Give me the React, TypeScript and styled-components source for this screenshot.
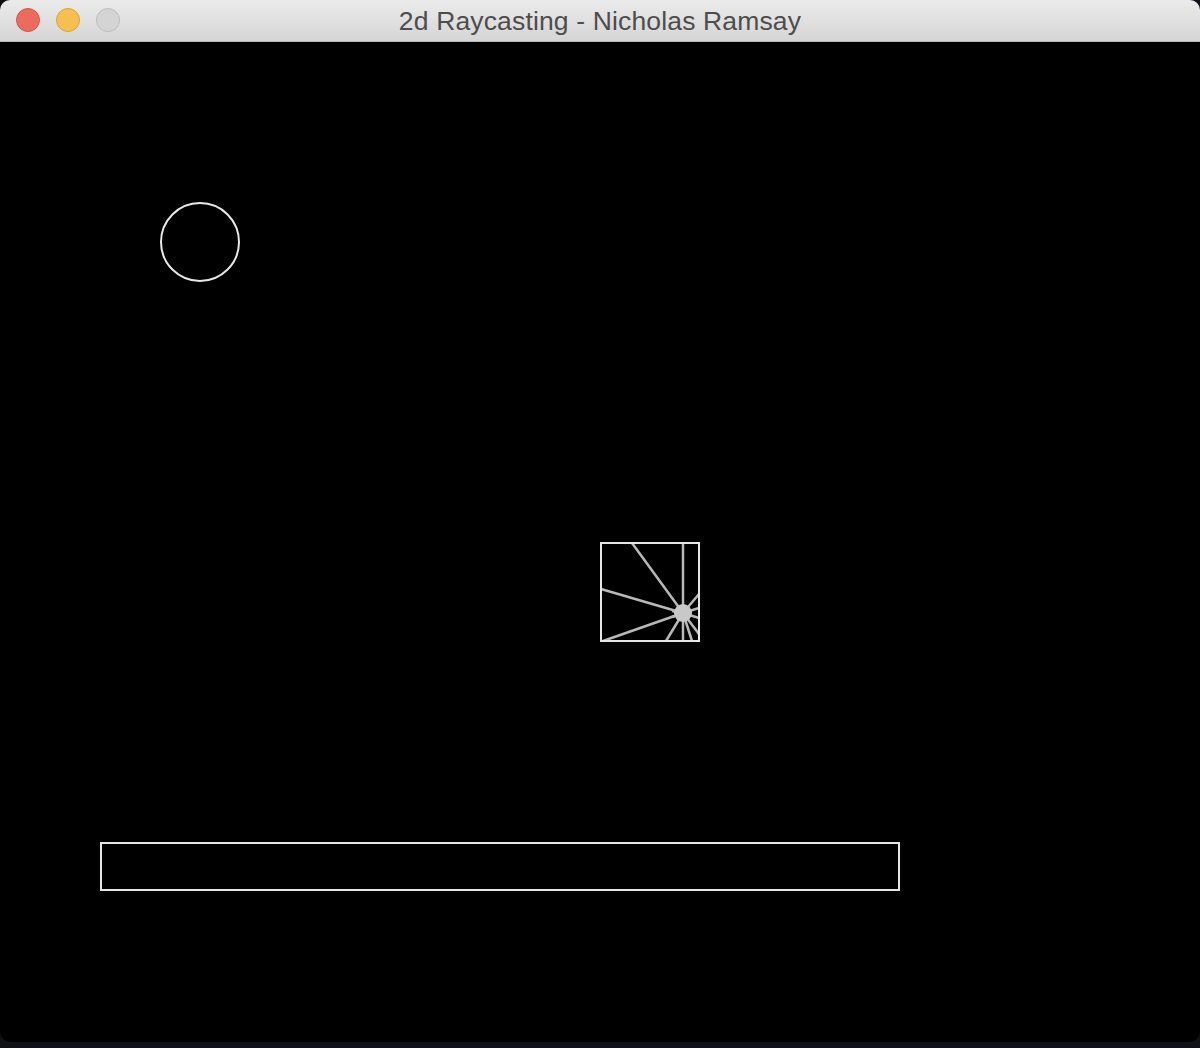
import React from "react";
import styled, { createGlobalStyle } from "styled-components";

const Global = createGlobalStyle`
  html, body { margin: 0; padding: 0; background: #0e1117; }
  #root { width: 1200px; height: 1048px; }
`;

const Page = styled.div`
  width: 1200px;
  height: 1048px;
  display: flex;
  flex-direction: column;
  background: #0e1117;
  overflow: hidden;
`;

const Window = styled.div`
  flex: 1;
  display: flex;
  flex-direction: column;
  border-radius: 10px;
  overflow: hidden;
  background: #000;
  box-shadow: inset 0 0 0 1px #2a2a2a;
`;

const TitleBar = styled.div`
  height: 41px;
  flex: 0 0 41px;
  border-bottom: 1px solid #b8b8b8;
  background: linear-gradient(#ebebeb, #d5d5d5);
  display: flex;
  align-items: center;
  position: relative;
  padding-left: 16px;
  gap: 16px;
`;

const Light = styled.span<{ $fill: string; $edge: string }>`
  width: 22px;
  height: 22px;
  border-radius: 50%;
  background: ${(p) => p.$fill};
  border: 1px solid ${(p) => p.$edge};
  margin-top: -1px;
`;

const Title = styled.div`
  position: absolute;
  left: 0;
  right: 0;
  top: 0;
  height: 41px;
  line-height: 42px;
  text-align: center;
  font-family: "Liberation Sans", Arial, sans-serif;
  font-size: 26.5px;
  letter-spacing: 0.15px;
  color: #4d4d4d;
  pointer-events: none;
`;

const Canvas = styled.div`
  flex: 1;
  background: #000;
  display: flex;
`;

const Strip = styled.div`
  height: 6px;
  flex: 0 0 6px;
  background: #0e1117;
`;

const light = { x: 683, y: 613 };
const rays: [number, number][] = [
  [632, 543],
  [683, 543],
  [601, 589],
  [603, 641],
  [666, 641],
  [683, 641],
  [699, 594],
  [699, 608],
  [699, 618],
  [699, 634],
  [692, 641],
  [672, 611],
  [672, 617],
];

export default function App() {
  return (
    <>
      <Global />
      <Page>
        <Window>
          <TitleBar>
            <Light $fill="#ec6a5e" $edge="#d4574c" />
            <Light $fill="#f5c04f" $edge="#d9a53b" />
            <Light $fill="#d4d4d4" $edge="#bdbdbd" />
            <Title>2d Raycasting - Nicholas Ramsay</Title>
          </TitleBar>
          <Canvas>
            <svg width="1200" height="999" viewBox="0 42 1200 999">
              <circle cx="200" cy="242" r="39" fill="none" stroke="#e8e8e8" strokeWidth="2" />
              {rays.map(([x, y], i) => (
                <line key={i} x1={light.x} y1={light.y} x2={x} y2={y} stroke="#b8b8b8" strokeWidth="2.5" />
              ))}
              <circle cx={light.x} cy={light.y} r="9" fill="#c8c8c8" />
              <rect x="601" y="543" width="98" height="98" fill="none" stroke="#e6e6e6" strokeWidth="2" />
              <rect x="101" y="843" width="798" height="47" fill="none" stroke="#e6e6e6" strokeWidth="2" />
            </svg>
          </Canvas>
        </Window>
        <Strip />
      </Page>
    </>
  );
}
